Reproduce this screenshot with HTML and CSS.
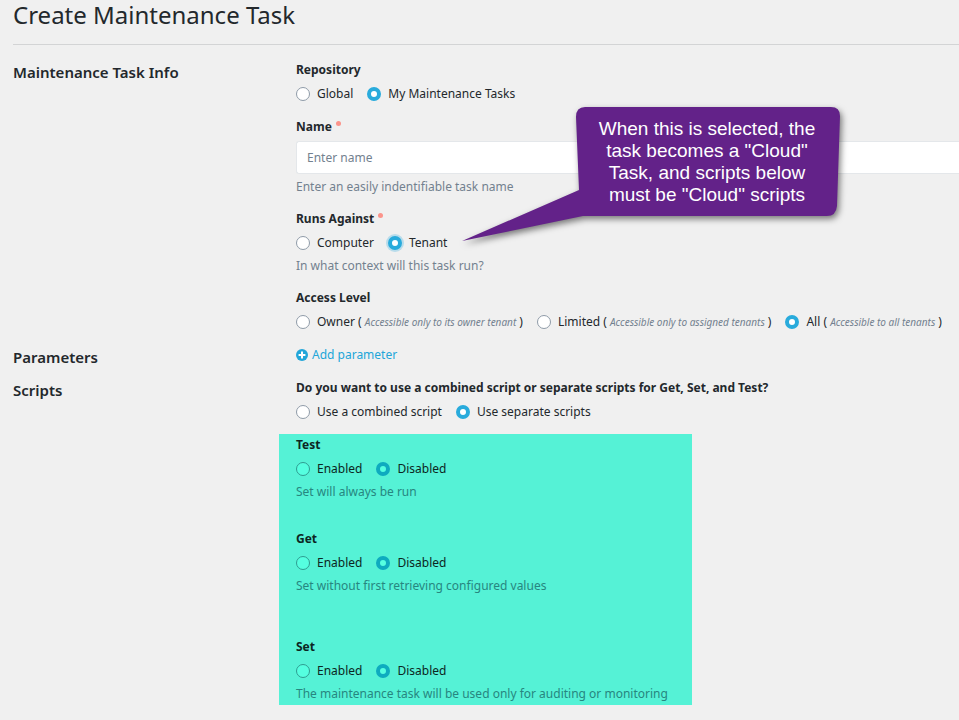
FILE: index.html
```html
<!DOCTYPE html>
<html lang="en">
<head>
<meta charset="utf-8">
<title>Create Maintenance Task</title>
<link rel="stylesheet" href="styles.css">
</head>
<body>
<main class="page">
  <h1 class="title">Create Maintenance Task</h1>
  <form class="form">
    <section class="section section-info">
      <h2 class="section-title">Maintenance Task Info</h2>
      <div class="fields">
        <fieldset class="field">
          <legend class="label">Repository</legend>
          <div class="options">
            <label class="option"><input class="radio" type="radio" name="repository"><span>Global</span></label>
            <label class="option"><input class="radio" type="radio" name="repository" checked><span>My Maintenance Tasks</span></label>
          </div>
        </fieldset>
        <div class="field">
          <label class="label required" for="name">Name</label>
          <input class="textbox" id="name" type="text" placeholder="Enter name">
          <p class="help">Enter an easily indentifiable task name</p>
        </div>
        <fieldset class="field anchor">
          <legend class="label required">Runs Against</legend>
          <div class="options">
            <label class="option"><input class="radio" type="radio" name="runs"><span>Computer</span></label>
            <label class="option"><input class="radio focused" type="radio" name="runs" checked><span>Tenant</span></label>
          </div>
          <p class="help">In what context will this task run?</p>
          <div class="callout">
            <svg class="callout-shape" viewBox="0 0 380 136" aria-hidden="true">
              <path d="M124 0H370Q379 0 379 9L376 99Q375 109 366 109H122L1 134L118 83L115 10Q115 0 124 0Z" fill="#632289"/>
            </svg>
            <p class="callout-text">When this is selected, the<br>task becomes a "Cloud"<br>Task, and scripts below<br>must be "Cloud" scripts</p>
          </div>
        </fieldset>
        <fieldset class="field">
          <legend class="label">Access Level</legend>
          <div class="options">
            <label class="option"><input class="radio" type="radio" name="access"><span>Owner ( <em>Accessible only to its owner tenant</em> )</span></label>
            <label class="option"><input class="radio" type="radio" name="access"><span>Limited ( <em>Accessible only to assigned tenants</em> )</span></label>
            <label class="option"><input class="radio" type="radio" name="access" checked><span>All ( <em>Accessible to all tenants</em> )</span></label>
          </div>
        </fieldset>
      </div>
    </section>
    <section class="section">
      <h2 class="section-title">Parameters</h2>
      <div class="fields">
        <button class="add" type="button">
          <svg class="add-icon" viewBox="0 0 12 12" aria-hidden="true"><circle cx="6" cy="6" r="6" fill="#22a6d9"/><path d="M6 2.6V9.4M2.6 6H9.4" stroke="#fff" stroke-width="2"/></svg>
          Add parameter
        </button>
      </div>
    </section>
    <section class="section">
      <h2 class="section-title">Scripts</h2>
      <div class="fields fields-scripts">
        <fieldset class="field">
          <legend class="label">Do you want to use a combined script or separate scripts for Get, Set, and Test?</legend>
          <div class="options">
            <label class="option"><input class="radio" type="radio" name="mode"><span>Use a combined script</span></label>
            <label class="option"><input class="radio" type="radio" name="mode" checked><span>Use separate scripts</span></label>
          </div>
        </fieldset>
        <div class="highlight">
          <fieldset class="field">
            <legend class="label">Test</legend>
            <div class="options">
              <label class="option"><input class="radio" type="radio" name="test"><span>Enabled</span></label>
              <label class="option"><input class="radio" type="radio" name="test" checked><span>Disabled</span></label>
            </div>
            <p class="help">Set will always be run</p>
          </fieldset>
          <fieldset class="field script-get">
            <legend class="label">Get</legend>
            <div class="options">
              <label class="option"><input class="radio" type="radio" name="get"><span>Enabled</span></label>
              <label class="option"><input class="radio" type="radio" name="get" checked><span>Disabled</span></label>
            </div>
            <p class="help">Set without first retrieving configured values</p>
          </fieldset>
          <fieldset class="field script-set">
            <legend class="label">Set</legend>
            <div class="options">
              <label class="option"><input class="radio" type="radio" name="set"><span>Enabled</span></label>
              <label class="option"><input class="radio" type="radio" name="set" checked><span>Disabled</span></label>
            </div>
            <p class="help">The maintenance task will be used only for auditing or monitoring</p>
          </fieldset>
        </div>
      </div>
    </section>
  </form>
</main>
</body>
</html>
```
FILE: styles.css
```css
* { box-sizing: border-box; }
body {
  margin: 0;
  background: #f0f0f0;
  color: #23282c;
  font: 12px/20px "Noto Sans", "Open Sans", sans-serif;
}
h1, h2, p, fieldset { margin: 0; padding: 0; border: 0; min-width: 0; }
legend { padding: 0; }
.page { padding-left: 13px; }
.title {
  font-size: 24px;
  font-weight: 400;
  line-height: 30px;
  padding-bottom: 14px;
  border-bottom: 1px solid #d3d4d5;
}
.form { display: flex; flex-direction: column; gap: 9px; padding-top: 15px; }
.section { display: grid; grid-template-columns: 283px minmax(0, 1fr); }
.section-info { padding-bottom: 4px; }
.section-title { font-size: 15px; font-weight: 600; line-height: 24px; }
.fields { display: flex; flex-direction: column; gap: 13px; }
.fields-scripts { gap: 12px; }
.label { display: block; margin-bottom: 4px; font-weight: 700; }
.required::after {
  content: "";
  display: inline-block;
  width: 5px;
  height: 5px;
  margin-left: 4px;
  border-radius: 50%;
  background: #fb948b;
  vertical-align: 5px;
}
.options { display: flex; gap: 14px; white-space: nowrap; }
.option { display: flex; align-items: center; gap: 7px; }
.option em { color: #73818f; font-size: 10px; }
.radio {
  appearance: none;
  flex: none;
  width: 14px;
  height: 14px;
  margin: 0;
  border: 1px solid #8f9ba8;
  border-radius: 50%;
  background: #fff;
}
.radio:checked { border: 4px solid #29abdc; }
.focused { box-shadow: 0 0 0 2px #b8dceb; }
.help { margin-top: 4px; line-height: 18px; color: #73818f; }
.textbox {
  display: block;
  width: 100%;
  height: 33px;
  padding: 0 10px;
  border: 1px solid #e4e7ea;
  border-right: 0;
  border-radius: 3px 0 0 3px;
  background: #fff;
  color: inherit;
  font: inherit;
}
.textbox::placeholder { color: #73818f; opacity: 1; }
.anchor { position: relative; }
.callout { position: absolute; left: 165px; top: -126px; width: 380px; }
.callout-shape { display: block; width: 380px; height: 136px; overflow: visible; filter: drop-shadow(2px 3px 3px rgb(0 0 0 / 50%)); }
.callout-text {
  position: absolute;
  left: 115px;
  top: 11px;
  width: 262px;
  color: #fff;
  font: 19px/22px "Liberation Sans", Arial, sans-serif;
  text-align: center;
}
.add {
  display: flex;
  align-items: center;
  gap: 4px;
  align-self: start;
  padding: 0;
  border: 0;
  background: none;
  color: #22a6d9;
  font: inherit;
}
.add-icon { width: 12px; height: 12px; }
.highlight {
  width: 413px;
  max-width: 100%;
  margin-left: -17px;
  padding: 1px 17px 2px;
  background: #55f2d6;
  color: #0c2622;
}
.highlight .help { color: #278680; white-space: nowrap; }
.highlight .radio { background: #55ffe0; border-color: #2f9c91; }
.highlight .radio:checked { border-color: #0eabbf; }
.script-get { margin-top: 28px; }
.script-set { margin-top: 42px; }
```
